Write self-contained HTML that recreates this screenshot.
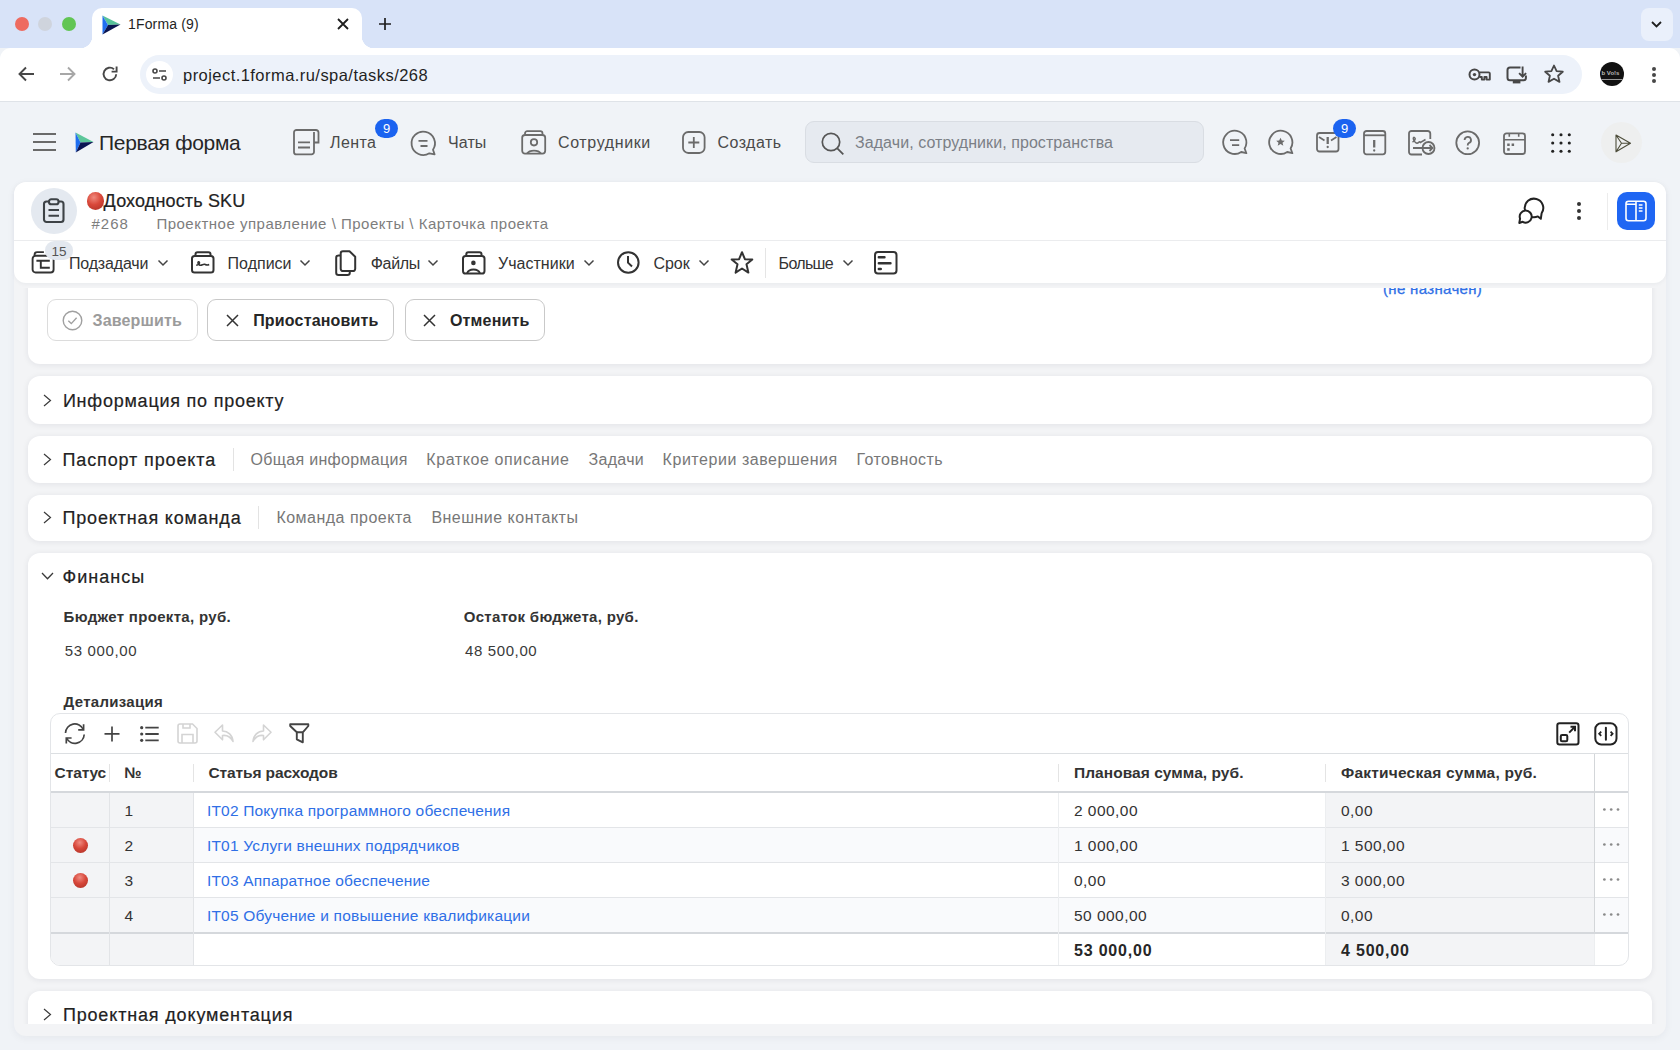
<!DOCTYPE html>
<html lang="ru">
<head>
<meta charset="utf-8">
<title>1Forma</title>
<style>
*{box-sizing:border-box;margin:0;padding:0}
html,body{width:1680px;height:1050px;overflow:hidden;background:#f0f3f7;font-family:"Liberation Sans",sans-serif;color:#262626;position:relative}
.a{position:absolute}
.t{position:absolute;line-height:1;white-space:nowrap}
svg{position:absolute;overflow:visible}
/* chrome */
#tabs{left:0;top:0;width:1680px;height:48px;background:#d8e3f8}
#addr{left:0;top:48px;width:1680px;height:54px;background:#fff;border-bottom:1px solid #dfe3e8;border-radius:11px 11px 0 0}
#app{left:0;top:102px;width:1680px;height:80px;background:#f0f3f7}
#panel{left:14px;top:182px;width:1652px;height:854px;background:#f3f4f6;border-radius:12px;box-shadow:0 2px 8px rgba(30,40,60,.05)}
#clip{left:14px;top:288px;width:1652px;height:736px;overflow:hidden}
.card{position:absolute;left:14px;width:1624px;background:#fff;border-radius:12px;box-shadow:0 1px 6px rgba(20,30,50,.08)}
</style>
</head>
<body>
<!-- TAB STRIP -->
<div id="tabs" class="a">
  <div class="a" style="left:15px;top:17px;width:14px;height:14px;border-radius:50%;background:#ee6b60"></div>
  <div class="a" style="left:38px;top:17px;width:14px;height:14px;border-radius:50%;background:#cfd4dd"></div>
  <div class="a" style="left:62px;top:17px;width:14px;height:14px;border-radius:50%;background:#61c554"></div>
  <div class="a" style="left:92px;top:8px;width:270px;height:40px;background:#fff;border-radius:10px 10px 0 0"></div>
  <div class="a" style="left:80px;top:36px;width:12px;height:12px;background:radial-gradient(circle at 0 0,transparent 12px,#fff 12.5px)"></div>
  <div class="a" style="left:362px;top:36px;width:12px;height:12px;background:radial-gradient(circle at 100% 0,transparent 12px,#fff 12.5px)"></div>
  <svg style="left:102px;top:15px" width="19" height="20" viewBox="0 0 19 20">
    <path d="M0.5 0.5 L18.5 9.5 L6 10 Z" fill="#57c29a"/>
    <path d="M0.5 0.5 L6 10 L0.5 19.5 Z" fill="#1f6ef0"/>
    <path d="M6 10 L18.5 9.5 L0.5 19.5 Z" fill="#0a1550"/>
  </svg>
  <div class="t" style="left:128px;top:17px;font-size:14px;color:#1f1f1f;letter-spacing:0.15px">1Forma (9)</div>
  <svg style="left:337px;top:18px" width="12" height="12" viewBox="0 0 12 12"><path d="M1 1L11 11M11 1L1 11" stroke="#1f1f1f" stroke-width="1.8"/></svg>
  <svg style="left:378.5px;top:18px" width="12" height="12" viewBox="0 0 12 12"><path d="M6 0V12M0 6H12" stroke="#1f1f1f" stroke-width="1.7"/></svg>
  <div class="a" style="left:1641px;top:8px;width:32px;height:33px;border-radius:8px;background:#eaf0fb"></div>
  <svg style="left:1651px;top:21px" width="11" height="7" viewBox="0 0 11 7"><path d="M1 1L5.5 5.5L10 1" stroke="#1f1f1f" stroke-width="1.8" fill="none"/></svg>
</div>
<!-- ADDRESS BAR -->
<div id="addr" class="a">
  <svg style="left:18px;top:18px" width="17" height="16" viewBox="0 0 17 16"><path d="M16 8H2M8 1.5L1.5 8L8 14.5" stroke="#474747" stroke-width="1.9" fill="none"/></svg>
  <svg style="left:59px;top:18px" width="17" height="16" viewBox="0 0 17 16"><path d="M1 8H15M9 1.5L15.5 8L9 14.5" stroke="#a7a7a7" stroke-width="1.9" fill="none"/></svg>
  <svg style="left:101px;top:17px" width="18" height="18" viewBox="0 0 18 18"><path d="M15.2 9.2A6.3 6.3 0 1 1 13 4.2" stroke="#474747" stroke-width="1.9" fill="none"/><path d="M15.6 1.6V6.6H10.6" stroke="#474747" stroke-width="1.9" fill="none"/></svg>
  <div class="a" style="left:140px;top:7px;width:1442px;height:39px;border-radius:20px;background:#edf2fa"></div>
  <div class="a" style="left:146px;top:13px;width:27px;height:27px;border-radius:50%;background:#fff"></div>
  <svg style="left:152px;top:20px" width="15" height="14" viewBox="0 0 15 14"><circle cx="3" cy="3" r="2" stroke="#474747" stroke-width="1.6" fill="none"/><path d="M7 3H14M1 10H8" stroke="#474747" stroke-width="1.6"/><circle cx="12" cy="10" r="2" stroke="#474747" stroke-width="1.6" fill="none"/></svg>
  <div class="t" style="left:183px;top:18.5px;font-size:16.5px;letter-spacing:0.45px;color:#1f1f1f">project.1forma.ru/spa/tasks/268</div>
  <svg style="left:1467.5px;top:19px" width="24" height="15" viewBox="0 0 24 15"><circle cx="6.5" cy="7.6" r="5" stroke="#474747" stroke-width="2" fill="none"/><circle cx="6.5" cy="7.6" r="1.7" fill="#474747"/><path d="M11.4 5.4H20.6A1.2 1.2 0 0 1 21.8 6.6V12.6H18.6V10H16.4V12.6H13.8V10H11.4" stroke="#474747" stroke-width="1.9" fill="none" stroke-linejoin="round"/></svg>
  <svg style="left:1506px;top:16px" width="22" height="21" viewBox="0 0 22 21"><path d="M14.5 3.5H4A2.5 2.5 0 0 0 1.5 6V13.8A2.5 2.5 0 0 0 4 16.3H17.7A2.2 2.2 0 0 0 19.9 14.1V11.5" stroke="#474747" stroke-width="2" fill="none"/><path d="M16.6 2.6V12.4M13.1 9.1L16.6 12.6L20.1 9.1" stroke="#474747" stroke-width="1.9" fill="none"/><rect x="6.8" y="16.8" width="7.6" height="2.6" fill="#474747"/></svg>
  <svg style="left:1544px;top:16px" width="20" height="20" viewBox="0 0 20 20"><path d="M10 1.5L12.6 7.2L18.8 7.7L14.1 11.8L15.5 17.9L10 14.7L4.5 17.9L5.9 11.8L1.2 7.7L7.4 7.2Z" stroke="#474747" stroke-width="1.8" fill="none" stroke-linejoin="round"/></svg>
  <div class="a" style="left:1600px;top:14px;width:24px;height:24px;border-radius:50%;background:#111;overflow:hidden"><div class="t" style="left:1.5px;top:8px;font-size:6px;font-weight:700;color:#bbb">b Vo!s</div><div class="a" style="left:0;top:16.5px;width:24px;height:1px;background:#999"></div></div>
  <div class="a" style="left:1652px;top:18.8px;width:4px;height:4px;border-radius:50%;background:#474747"></div>
  <div class="a" style="left:1652px;top:24.8px;width:4px;height:4px;border-radius:50%;background:#474747"></div>
  <div class="a" style="left:1652px;top:30.8px;width:4px;height:4px;border-radius:50%;background:#474747"></div>
</div>
<!-- APP HEADER -->
<div id="app" class="a">
  <svg style="left:33px;top:31px" width="23" height="18" viewBox="0 0 23 18"><path d="M0 1H23M0 9H23M0 17H23" stroke="#6a6a6a" stroke-width="2"/></svg>
  <svg style="left:75px;top:30px" width="19" height="21" viewBox="0 0 19 21">
    <path d="M0.5 0.5 L18.5 10 L5.5 10.5 Z" fill="#5cc69a"/>
    <path d="M0.5 0.5 L5.5 10.5 L0.8 20.5 Z" fill="#1f6ef0"/>
    <path d="M5.5 10.5 L18.5 10 L0.8 20.5 Z" fill="#0a1452"/>
  </svg>
  <div class="t" style="left:99px;top:30.2px;font-size:21px;letter-spacing:-0.3px;color:#262626">Первая форма</div>
  <!-- Лента -->
  <svg style="left:293px;top:27px" width="27" height="27" viewBox="0 0 27 27"><path d="M1 3.5A2.5 2.5 0 0 1 3.5 1H23A2.5 2.5 0 0 1 25.5 3.5V13.5H21M21 3V22.9A2.5 2.5 0 0 1 18.5 25.4H3.5A2.5 2.5 0 0 1 1 22.9V3.5" stroke="#6b6b6b" stroke-width="1.8" fill="none"/><path d="M5 13.3H17M5 18.5H17" stroke="#6b6b6b" stroke-width="1.8"/></svg>
  <div class="t" style="left:330px;top:33.4px;font-size:16px;letter-spacing:0.4px;color:#4a4a4a">Лента</div>
  <div class="a" style="left:375px;top:17px;width:23px;height:19px;border-radius:10px;background:#1b63f0;color:#fff;font-size:13px;line-height:19px;text-align:center">9</div>
  <!-- Чаты -->
  <svg style="left:409.5px;top:26.5px" width="26" height="26" viewBox="0 0 26 26"><path d="M23 20.8A11.7 11.7 0 1 0 19.4 24.3L24.6 25.4Z" stroke="#6b6b6b" stroke-width="1.8" fill="none" stroke-linejoin="round"/><path d="M8.5 11.8H17.5M10.5 17H17.5" stroke="#6b6b6b" stroke-width="1.8"/></svg>
  <div class="t" style="left:448px;top:33.4px;font-size:16px;letter-spacing:0.1px;color:#4a4a4a">Чаты</div>
  <!-- Сотрудники -->
  <svg style="left:520.5px;top:28px" width="26" height="26" viewBox="0 0 26 26"><path d="M4 4.6V3.5A2.3 2.3 0 0 1 6.3 1.2H19.2A2.3 2.3 0 0 1 21.5 3.5V4.6" stroke="#6b6b6b" stroke-width="1.8" fill="none"/><rect x="1.2" y="5" width="23" height="18.6" rx="2.8" stroke="#6b6b6b" stroke-width="1.8" fill="none"/><circle cx="13" cy="12.3" r="3.2" stroke="#6b6b6b" stroke-width="1.8" fill="none"/><path d="M6 23.6A7.6 5 0 0 1 20 23.6" stroke="#6b6b6b" stroke-width="1.8" fill="none"/></svg>
  <div class="t" style="left:558px;top:33.4px;font-size:16px;letter-spacing:0.62px;color:#4a4a4a">Сотрудники</div>
  <!-- Создать -->
  <svg style="left:682px;top:28.8px" width="24" height="24" viewBox="0 0 24 24"><rect x="1" y="1" width="21.6" height="21" rx="5.3" stroke="#6b6b6b" stroke-width="1.8" fill="none"/><path d="M11.8 6V17M6.3 11.5H17.3" stroke="#6b6b6b" stroke-width="1.8"/></svg>
  <div class="t" style="left:717.5px;top:33.4px;font-size:16px;letter-spacing:0.45px;color:#4a4a4a">Создать</div>
  <!-- search -->
  <div class="a" style="left:805px;top:19px;width:399px;height:42px;border-radius:9px;background:#e6eaf0;border:1px solid #d9dde3"></div>
  <svg style="left:821px;top:30px" width="24" height="24" viewBox="0 0 24 24"><circle cx="10" cy="10" r="8.7" stroke="#555" stroke-width="1.7" fill="none"/><path d="M16.3 16.3L22.3 22.3" stroke="#555" stroke-width="1.8"/></svg>
  <div class="t" style="left:855px;top:32.5px;font-size:16px;letter-spacing:0.07px;color:#7b7f86">Задачи, сотрудники, пространства</div>
  <!-- right icons -->
  <svg style="left:1221.5px;top:26px" width="26" height="26" viewBox="0 0 26 26"><path d="M22.6 20.5A11.6 11.6 0 1 0 19.2 24L24.4 25.2Z" stroke="#6b6b6b" stroke-width="1.8" fill="none" stroke-linejoin="round"/><path d="M8 12.2H17.2M10 17.2H17.2" stroke="#6b6b6b" stroke-width="1.8"/></svg>
  <svg style="left:1268px;top:26px" width="26" height="26" viewBox="0 0 26 26"><path d="M22.6 20.5A11.6 11.6 0 1 0 19.2 24L24.4 25.2Z" stroke="#6b6b6b" stroke-width="1.8" fill="none" stroke-linejoin="round"/><path d="M12.5 9.8L13.8 12.6L16.8 12.8L14.5 14.8L15.3 17.7L12.5 16.1L9.7 17.7L10.5 14.8L8.2 12.8L11.2 12.6Z" fill="#6b6b6b"/></svg>
  <svg style="left:1316px;top:27.8px" width="24" height="22" viewBox="0 0 24 22"><rect x="1" y="3" width="21.5" height="18.5" rx="2.5" stroke="#6b6b6b" stroke-width="1.8" fill="none"/><path d="M3 7L8.5 10.5M20.5 7L15 10.5" stroke="#6b6b6b" stroke-width="1.8"/><path d="M11.7 7V14" stroke="#6b6b6b" stroke-width="2.3"/><circle cx="11.7" cy="17" r="1.15" fill="#6b6b6b"/></svg>
  <div class="a" style="left:1333px;top:16.5px;width:23px;height:19.5px;border-radius:10px;background:#1b63f0;color:#fff;font-size:13px;line-height:19.5px;text-align:center">9</div>
  <svg style="left:1363px;top:27.6px" width="24" height="26" viewBox="0 0 24 26"><rect x="1" y="1" width="21.3" height="23.3" rx="2.5" stroke="#6b6b6b" stroke-width="1.8" fill="none"/><path d="M1 5.3H22.3" stroke="#6b6b6b" stroke-width="1.8"/><path d="M11.2 10V17.5" stroke="#6b6b6b" stroke-width="2.3"/><circle cx="11.2" cy="20.5" r="1.15" fill="#6b6b6b"/></svg>
  <svg style="left:1408px;top:28px" width="30" height="28" viewBox="0 0 30 28"><path d="M22.3 9V3.5A2.5 2.5 0 0 0 19.8 1H3.5A2.5 2.5 0 0 0 1 3.5V22A2.5 2.5 0 0 0 3.5 24.5H14" stroke="#6b6b6b" stroke-width="1.8" fill="none"/><path d="M4.5 12C7 11 8 8.5 6.5 7.5S4.5 10 7.5 12.5S11 10 12.5 12.5L17.5 9.5" stroke="#6b6b6b" stroke-width="1.5" fill="none"/><path d="M5 18H24.5M21.5 15L24.5 18L21.5 21" stroke="#6b6b6b" stroke-width="1.8" fill="none"/><circle cx="20.5" cy="18" r="6" stroke="#6b6b6b" stroke-width="1.8" fill="none"/></svg>
  <svg style="left:1455px;top:27.5px" width="26" height="26" viewBox="0 0 26 26"><circle cx="12.7" cy="12.8" r="11.4" stroke="#6b6b6b" stroke-width="1.8" fill="none"/><path d="M9.6 10A3.2 3.2 0 1 1 13.7 13.1C12.9 13.5 12.7 14.1 12.7 15.4" stroke="#6b6b6b" stroke-width="1.8" fill="none"/><circle cx="12.7" cy="18.4" r="1.15" fill="#6b6b6b"/></svg>
  <svg style="left:1503px;top:28.5px" width="24" height="25" viewBox="0 0 24 25"><rect x="1" y="2.3" width="21" height="20.7" rx="2.5" stroke="#6b6b6b" stroke-width="1.8" fill="none"/><path d="M1 8.7H22M6.3 2.3V5.8M15.7 2.3V5.8" stroke="#6b6b6b" stroke-width="1.6"/><rect x="4.2" y="12.5" width="2.5" height="2.5" fill="#6b6b6b"/><rect x="8.6" y="12.5" width="2.5" height="2.5" fill="#6b6b6b"/><rect x="4.2" y="17.2" width="2.5" height="2.5" fill="#6b6b6b"/></svg>
  <svg style="left:1551px;top:31px" width="21" height="21" viewBox="0 0 21 21"><g fill="#222"><circle cx="1.7" cy="1.7" r="1.55"/><circle cx="10" cy="1.7" r="1.55"/><circle cx="18.3" cy="1.7" r="1.55"/><circle cx="1.7" cy="10" r="1.55"/><circle cx="10" cy="10" r="1.55"/><circle cx="18.3" cy="10" r="1.55"/><circle cx="1.7" cy="18.3" r="1.55"/><circle cx="10" cy="18.3" r="1.55"/><circle cx="18.3" cy="18.3" r="1.55"/></g></svg>
  <div class="a" style="left:1601px;top:20px;width:41px;height:41px;border-radius:50%;background:#eeefef"></div>
  <svg style="left:1615px;top:31px" width="17" height="20" viewBox="0 0 17 20"><path d="M1 2L15.5 10.3L1 18.8Z M1 18.8L6.5 10.3L1 2 M6.5 10.3H15.5" stroke="#4d4d3a" stroke-width="1.1" fill="none" stroke-linejoin="round"/></svg>
</div>
<!-- PANEL -->
<div id="panel" class="a"></div>
<div id="clip" class="a">
<div class="card" style="top:-88px;height:164px"></div>
<div class="a" style="left:33px;top:11.3px;width:150.5px;height:42px;border:1px solid #dcdcdc;border-radius:9px;background:#fff"></div>
<svg style="left:48px;top:22px" width="21" height="21" viewBox="0 0 21 21"><circle cx="10.5" cy="10.5" r="9.3" stroke="#a0a0a0" stroke-width="1.4" fill="none"/><path d="M6.3 10.8L9.3 13.6L14.6 7.8" stroke="#a0a0a0" stroke-width="1.4" fill="none"/></svg>
<div class="t" style="left:78.5px;top:25.16px;font-size:16px;letter-spacing:0.15px;font-weight:700;color:#9b9b9b">Завершить</div>
<div class="a" style="left:193.3px;top:11.3px;width:186.5px;height:42px;border:1px solid #c9c9c9;border-radius:9px;background:#fff"></div>
<svg style="left:212px;top:26px" width="13" height="13" viewBox="0 0 13 13"><path d="M1 1L12 12M12 1L1 12" stroke="#333" stroke-width="1.5"/></svg>
<div class="t" style="left:239.2px;top:25.16px;font-size:16px;letter-spacing:0.18px;font-weight:700;color:#262626">Приостановить</div>
<div class="a" style="left:390.5px;top:11.3px;width:140.5px;height:42px;border:1px solid #c9c9c9;border-radius:9px;background:#fff"></div>
<svg style="left:409px;top:26px" width="13" height="13" viewBox="0 0 13 13"><path d="M1 1L12 12M12 1L1 12" stroke="#333" stroke-width="1.5"/></svg>
<div class="t" style="left:436.0px;top:25.16px;font-size:16px;letter-spacing:0.16px;font-weight:700;color:#262626">Отменить</div>
<div class="t" style="left:1369.0px;top:-7.50px;font-size:15px;letter-spacing:0.33px;font-weight:400;color:#2f6fe6;-webkit-text-stroke:0.3px #2f6fe6">(не назначен)</div>
<div class="card" style="top:88px;height:48px"></div>
<svg style="left:29.0px;top:105.5px" width="9" height="13" viewBox="0 0 9 13"><path d="M1 1L7.5 6.5L1 12" stroke="#3a3a3a" stroke-width="1.2" fill="none"/></svg>
<div class="t" style="left:48.9px;top:103.66px;font-size:18px;letter-spacing:0.77px;font-weight:400;color:#222;-webkit-text-stroke:0.2px #222">Информация по проекту</div>
<div class="card" style="top:148px;height:46.5px"></div>
<svg style="left:29.0px;top:164.5px" width="9" height="13" viewBox="0 0 9 13"><path d="M1 1L7.5 6.5L1 12" stroke="#3a3a3a" stroke-width="1.2" fill="none"/></svg>
<div class="t" style="left:48.5px;top:163.46px;font-size:18px;letter-spacing:0.87px;font-weight:400;color:#222;-webkit-text-stroke:0.2px #222">Паспорт проекта</div>
<div class="a" style="left:219px;top:160px;width:1px;height:23px;background:#e3e3e3"></div>
<div class="t" style="left:236.5px;top:163.86px;font-size:16px;letter-spacing:0.32px;font-weight:400;color:#777">Общая информация</div>
<div class="t" style="left:412.3px;top:163.86px;font-size:16px;letter-spacing:0.6px;font-weight:400;color:#777">Краткое описание</div>
<div class="t" style="left:574.6px;top:163.86px;font-size:16px;letter-spacing:0.28px;font-weight:400;color:#777">Задачи</div>
<div class="t" style="left:648.6px;top:163.86px;font-size:16px;letter-spacing:0.54px;font-weight:400;color:#777">Критерии завершения</div>
<div class="t" style="left:842.5px;top:163.86px;font-size:16px;letter-spacing:0.44px;font-weight:400;color:#777">Готовность</div>
<div class="card" style="top:206.5px;height:46.5px"></div>
<svg style="left:29.0px;top:222.5px" width="9" height="13" viewBox="0 0 9 13"><path d="M1 1L7.5 6.5L1 12" stroke="#3a3a3a" stroke-width="1.2" fill="none"/></svg>
<div class="t" style="left:48.5px;top:221.46px;font-size:18px;letter-spacing:0.83px;font-weight:400;color:#222;-webkit-text-stroke:0.2px #222">Проектная команда</div>
<div class="a" style="left:244px;top:218px;width:1px;height:23px;background:#e3e3e3"></div>
<div class="t" style="left:262.4px;top:221.96px;font-size:16px;letter-spacing:0.49px;font-weight:400;color:#777">Команда проекта</div>
<div class="t" style="left:417.4px;top:221.96px;font-size:16px;letter-spacing:0.48px;font-weight:400;color:#777">Внешние контакты</div>
<div class="card" style="top:264.5px;height:426.5px"></div>
<svg style="left:26.5px;top:284.0px" width="13" height="8" viewBox="0 0 13 8"><path d="M1 1L6.5 6.8L12 1" stroke="#3a3a3a" stroke-width="1.3" fill="none"/></svg>
<div class="t" style="left:48.5px;top:279.96px;font-size:18px;letter-spacing:1.0px;font-weight:400;color:#222;-webkit-text-stroke:0.2px #222">Финансы</div>
<div class="t" style="left:49.6px;top:321.20px;font-size:15px;letter-spacing:0.32px;font-weight:700;color:#333">Бюджет проекта, руб.</div>
<div class="t" style="left:449.7px;top:321.20px;font-size:15px;letter-spacing:0.31px;font-weight:700;color:#333">Остаток бюджета, руб.</div>
<div class="t" style="left:50.8px;top:355.10px;font-size:15px;letter-spacing:0.62px;font-weight:400;color:#3a3a3a">53 000,00</div>
<div class="t" style="left:451.0px;top:355.10px;font-size:15px;letter-spacing:0.62px;font-weight:400;color:#3a3a3a">48 500,00</div>
<div class="t" style="left:49.6px;top:405.50px;font-size:15px;letter-spacing:0.29px;font-weight:700;color:#333">Детализация</div>
<div class="card" style="top:703px;height:80px"></div>
<svg style="left:29.0px;top:720.0px" width="9" height="13" viewBox="0 0 9 13"><path d="M1 1L7.5 6.5L1 12" stroke="#3a3a3a" stroke-width="1.2" fill="none"/></svg>
<div class="t" style="left:48.9px;top:718.26px;font-size:18px;letter-spacing:0.84px;font-weight:400;color:#222;-webkit-text-stroke:0.2px #222">Проектная документация</div>
<div class="a" style="left:36px;top:425.3px;width:1579px;height:252.7px;border:1px solid #e3e5e8;border-radius:10px;background:#fff;overflow:hidden">
<div class="a" style="left:-1.0px;top:78.7px;width:143.0px;height:177.0px;background:#f3f4f6"></div>
<div class="a" style="left:1275.0px;top:78.7px;width:268.0px;height:177.0px;background:#f3f4f6"></div>
<div class="a" style="left:143.0px;top:113.7px;width:1131.0px;height:34.0px;background:#f9fafc"></div>
<div class="a" style="left:1544.0px;top:113.7px;width:35.0px;height:34.0px;background:#f9fafc"></div>
<div class="a" style="left:143.0px;top:183.7px;width:1131.0px;height:34.0px;background:#f9fafc"></div>
<div class="a" style="left:1544.0px;top:183.7px;width:35.0px;height:34.0px;background:#f9fafc"></div>
<div class="a" style="left:-1.0px;top:38.7px;width:1580.0px;height:1.0px;background:#dcdfe2"></div>
<div class="a" style="left:-1.0px;top:77.0px;width:1580.0px;height:2.0px;background:#d5d8dc"></div>
<div class="a" style="left:-1.0px;top:112.7px;width:1580.0px;height:1.0px;background:#e3e5e8"></div>
<div class="a" style="left:-1.0px;top:147.7px;width:1580.0px;height:1.0px;background:#e3e5e8"></div>
<div class="a" style="left:-1.0px;top:182.7px;width:1580.0px;height:1.0px;background:#e3e5e8"></div>
<div class="a" style="left:-1.0px;top:217.7px;width:1580.0px;height:2.0px;background:#d5d8dc"></div>
<div class="a" style="left:58.0px;top:78.7px;width:1.0px;height:177.0px;background:#e2e4e7"></div>
<div class="a" style="left:142.0px;top:78.7px;width:1.0px;height:177.0px;background:#e2e4e7"></div>
<div class="a" style="left:1007.0px;top:78.7px;width:1.0px;height:177.0px;background:#eceef0"></div>
<div class="a" style="left:1274.0px;top:78.7px;width:1.0px;height:177.0px;background:#eceef0"></div>
<div class="a" style="left:1542.7px;top:39.7px;width:1.5px;height:178.0px;background:#d3d6d9"></div>
<div class="a" style="left:1542.7px;top:219.7px;width:1.0px;height:36.0px;background:#eceef0"></div>
<div class="a" style="left:58.0px;top:49.7px;width:1.0px;height:18.0px;background:#e4e4e4"></div>
<div class="a" style="left:142.0px;top:49.7px;width:1.0px;height:18.0px;background:#e4e4e4"></div>
<div class="a" style="left:1007.0px;top:49.7px;width:1.0px;height:18.0px;background:#e4e4e4"></div>
<div class="a" style="left:1274.0px;top:49.7px;width:1.0px;height:18.0px;background:#e4e4e4"></div>
<div class="t" style="left:3.6px;top:50.78px;font-size:15.5px;letter-spacing:-0.12px;font-weight:700;color:#333">Статус</div>
<div class="t" style="left:73.3px;top:50.78px;font-size:15.5px;letter-spacing:0px;font-weight:700;color:#333">№</div>
<div class="t" style="left:157.4px;top:50.78px;font-size:15.5px;letter-spacing:-0.1px;font-weight:700;color:#333">Статья расходов</div>
<div class="t" style="left:1023.0px;top:50.78px;font-size:15.5px;letter-spacing:0.05px;font-weight:700;color:#333">Плановая сумма, руб.</div>
<div class="t" style="left:1290.0px;top:50.78px;font-size:15.5px;letter-spacing:0.21px;font-weight:700;color:#333">Фактическая сумма, руб.</div>
<div class="t" style="left:73.6px;top:88.68px;font-size:15.5px;letter-spacing:0px;font-weight:400;color:#333">1</div>
<div class="t" style="left:155.9px;top:88.88px;font-size:15.5px;letter-spacing:0.2px;font-weight:400;color:#2f6fe6">IT02 Покупка программного обеспечения</div>
<div class="t" style="left:1023.0px;top:88.68px;font-size:15.5px;letter-spacing:0.46px;font-weight:400;color:#333">2 000,00</div>
<div class="t" style="left:1290.0px;top:88.68px;font-size:15.5px;letter-spacing:0.46px;font-weight:400;color:#333">0,00</div>
<svg style="left:1552.0px;top:94.2px" width="17" height="3" viewBox="0 0 17 3"><circle cx="1.4" cy="1.5" r="1.35" fill="#8a8a8a"/><circle cx="8.2" cy="1.5" r="1.35" fill="#8a8a8a"/><circle cx="15" cy="1.5" r="1.35" fill="#8a8a8a"/></svg>
<div class="a" style="left:22px;top:123.9px;width:15px;height:15px;border-radius:50%;background:radial-gradient(circle at 45% 30%,#ef8a80 0,#d7473a 45%,#a92e23 100%)"></div>
<div class="t" style="left:73.6px;top:123.68px;font-size:15.5px;letter-spacing:0px;font-weight:400;color:#333">2</div>
<div class="t" style="left:155.9px;top:123.88px;font-size:15.5px;letter-spacing:0.2px;font-weight:400;color:#2f6fe6">IT01 Услуги внешних подрядчиков</div>
<div class="t" style="left:1023.0px;top:123.68px;font-size:15.5px;letter-spacing:0.46px;font-weight:400;color:#333">1 000,00</div>
<div class="t" style="left:1290.0px;top:123.68px;font-size:15.5px;letter-spacing:0.46px;font-weight:400;color:#333">1 500,00</div>
<svg style="left:1552.0px;top:129.2px" width="17" height="3" viewBox="0 0 17 3"><circle cx="1.4" cy="1.5" r="1.35" fill="#8a8a8a"/><circle cx="8.2" cy="1.5" r="1.35" fill="#8a8a8a"/><circle cx="15" cy="1.5" r="1.35" fill="#8a8a8a"/></svg>
<div class="a" style="left:22px;top:158.9px;width:15px;height:15px;border-radius:50%;background:radial-gradient(circle at 45% 30%,#ef8a80 0,#d7473a 45%,#a92e23 100%)"></div>
<div class="t" style="left:73.6px;top:158.68px;font-size:15.5px;letter-spacing:0px;font-weight:400;color:#333">3</div>
<div class="t" style="left:155.9px;top:158.88px;font-size:15.5px;letter-spacing:0.2px;font-weight:400;color:#2f6fe6">IT03 Аппаратное обеспечение</div>
<div class="t" style="left:1023.0px;top:158.68px;font-size:15.5px;letter-spacing:0.46px;font-weight:400;color:#333">0,00</div>
<div class="t" style="left:1290.0px;top:158.68px;font-size:15.5px;letter-spacing:0.46px;font-weight:400;color:#333">3 000,00</div>
<svg style="left:1552.0px;top:164.2px" width="17" height="3" viewBox="0 0 17 3"><circle cx="1.4" cy="1.5" r="1.35" fill="#8a8a8a"/><circle cx="8.2" cy="1.5" r="1.35" fill="#8a8a8a"/><circle cx="15" cy="1.5" r="1.35" fill="#8a8a8a"/></svg>
<div class="t" style="left:73.6px;top:193.68px;font-size:15.5px;letter-spacing:0px;font-weight:400;color:#333">4</div>
<div class="t" style="left:155.9px;top:193.88px;font-size:15.5px;letter-spacing:0.2px;font-weight:400;color:#2f6fe6">IT05 Обучение и повышение квалификации</div>
<div class="t" style="left:1023.0px;top:193.68px;font-size:15.5px;letter-spacing:0.46px;font-weight:400;color:#333">50 000,00</div>
<div class="t" style="left:1290.0px;top:193.68px;font-size:15.5px;letter-spacing:0.46px;font-weight:400;color:#333">0,00</div>
<svg style="left:1552.0px;top:199.2px" width="17" height="3" viewBox="0 0 17 3"><circle cx="1.4" cy="1.5" r="1.35" fill="#8a8a8a"/><circle cx="8.2" cy="1.5" r="1.35" fill="#8a8a8a"/><circle cx="15" cy="1.5" r="1.35" fill="#8a8a8a"/></svg>
<div class="t" style="left:1023.0px;top:229.16px;font-size:16px;letter-spacing:0.8px;font-weight:700;color:#262626">53 000,00</div>
<div class="t" style="left:1290.0px;top:229.16px;font-size:16px;letter-spacing:0.8px;font-weight:700;color:#262626">4 500,00</div>
<svg style="left:13.0px;top:8.7px" width="22" height="22" viewBox="0 0 22 22"><path d="M1.5 10A9.3 9.3 0 0 1 19.3 6.5" stroke="#444" stroke-width="1.7" fill="none"/><path d="M19.6 1.2V6.8H14.2" stroke="#444" stroke-width="1.7" fill="none"/><path d="M20.2 11.5A9.3 9.3 0 0 1 2.6 15.2" stroke="#444" stroke-width="1.7" fill="none"/><path d="M2.3 20.5V15H7.6" stroke="#444" stroke-width="1.7" fill="none"/></svg>
<svg style="left:53.0px;top:11.7px" width="16" height="16" viewBox="0 0 16 16"><path d="M8 0.5V15.5M0.5 7.8H15.5" stroke="#444" stroke-width="1.7"/></svg>
<svg style="left:89.0px;top:11.7px" width="20" height="16" viewBox="0 0 20 16"><circle cx="1.7" cy="1.7" r="1.6" fill="#444"/><circle cx="1.7" cy="8" r="1.6" fill="#444"/><circle cx="1.7" cy="14.3" r="1.6" fill="#444"/><path d="M5.3 1.7H18.7M5.3 8H18.7M5.3 14.3H18.7" stroke="#444" stroke-width="1.8"/></svg>
<svg style="left:125.5px;top:9.2px" width="21" height="21" viewBox="0 0 21 21"><path d="M1 3A2 2 0 0 1 3 1H15.5L20 5.5V18A2 2 0 0 1 18 20H3A2 2 0 0 1 1 18Z" stroke="#d4d4d4" stroke-width="1.6" fill="none"/><path d="M6 1V5H13V1M5 20V11.5H16V20" stroke="#d4d4d4" stroke-width="1.6" fill="none"/></svg>
<svg style="left:162.5px;top:10.2px" width="21" height="19" viewBox="0 0 21 19"><path d="M8.5 1L1 8.3L8.5 15.8V11.5C12.5 11 16.5 12.5 19 17.5C18.5 11 14 7 8.5 7Z" stroke="#d4d4d4" stroke-width="1.6" fill="none" stroke-linejoin="round"/></svg>
<svg style="left:200.0px;top:10.2px" width="21" height="19" viewBox="0 0 21 19"><path d="M12.5 1L20 8.3L12.5 15.8V11.5C8.5 11 4.5 12.5 2 17.5C2.5 11 7 7 12.5 7Z" stroke="#d4d4d4" stroke-width="1.6" fill="none" stroke-linejoin="round"/></svg>
<svg style="left:237.5px;top:9.2px" width="21" height="21" viewBox="0 0 21 21"><path d="M1.2 1.3H19.3V3L13.8 9.3V19.3L7.8 16.3V9.3L1.2 3Z" stroke="#444" stroke-width="1.9" fill="none" stroke-linejoin="round"/><path d="M7.8 9.3H13.8" stroke="#444" stroke-width="1.9"/></svg>
<svg style="left:1505.0px;top:8.0px" width="24" height="24" viewBox="0 0 24 24"><rect x="1.3" y="1.3" width="21.2" height="21.2" rx="2.3" stroke="#222" stroke-width="2" fill="none"/><rect x="4.8" y="12.9" width="6.5" height="6.3" rx="1.3" stroke="#222" stroke-width="2" fill="none"/><path d="M13.2 10.6L19 4.8M14.5 4.8H19V9.3" stroke="#222" stroke-width="2" fill="none"/></svg>
<svg style="left:1542.5px;top:8.0px" width="24" height="24" viewBox="0 0 24 24"><rect x="1.3" y="1.3" width="21.2" height="21.2" rx="6" stroke="#222" stroke-width="2" fill="none"/><path d="M11.9 5.8V17.8" stroke="#222" stroke-width="2" stroke-linecap="round"/><path d="M7.2 9.7L5.2 11.8L7.2 13.9M16.6 9.7L18.6 11.8L16.6 13.9" stroke="#222" stroke-width="1.8" fill="none"/></svg>
</div>
</div>
<!-- HEADER CARD -->
<div id="hcard" class="a" style="left:14px;top:182px;width:1652px;height:101px;background:#fff;border-radius:12px;box-shadow:0 1px 4px rgba(20,30,50,.05)">
  <div class="a" style="left:16.5px;top:6px;width:46px;height:46px;border-radius:50%;background:#e4e9f0"></div>
  <svg style="left:29px;top:16px" width="22" height="26" viewBox="0 0 22 26"><path d="M6 3.5H3.5A2.5 2.5 0 0 0 1 6V21.5A2.5 2.5 0 0 0 3.5 24H18A2.5 2.5 0 0 0 20.5 21.5V6A2.5 2.5 0 0 0 18 3.5H15.5" stroke="#3d4246" stroke-width="2.1" fill="none"/><rect x="6" y="1.3" width="9.5" height="5" rx="2.3" stroke="#3d4246" stroke-width="2.1" fill="none"/><path d="M5.5 12H16M5.5 17.8H16" stroke="#3d4246" stroke-width="2.1"/></svg>
  <div class="a" style="left:72.5px;top:10px;width:17.5px;height:17.5px;border-radius:50%;background:radial-gradient(circle at 40% 30%,#f08a7e 0,#d9483a 45%,#a92e23 100%)"></div>
  <div class="t" style="left:89.6px;top:9.8px;font-size:18px;letter-spacing:0.15px;color:#222;-webkit-text-stroke:0.2px #222">Доходность SKU</div>
  <div class="t" style="left:77.4px;top:33.9px;font-size:15px;letter-spacing:1.05px;color:#7d7d7d">#268</div>
  <div class="t" style="left:142.4px;top:33.9px;font-size:15px;letter-spacing:0.5px;color:#7d7d7d">Проектное управление \ Проекты \ Карточка проекта</div>
  <!-- right -->
  <svg style="left:1504px;top:15px" width="28" height="28" viewBox="0 0 28 28"><path d="M19.9 19.4A9.3 9.3 0 1 1 23.6 16.3L22.8 21.8Z" stroke="#222" stroke-width="2" fill="none" stroke-linejoin="round"/><path d="M2.06 21.65A6 6 0 1 1 4.7 24.8L1.3 26Z" stroke="#222" stroke-width="2" fill="#fff" stroke-linejoin="round"/></svg>
  <div class="a" style="left:1562.5px;top:19.8px;width:4.4px;height:4.4px;border-radius:50%;background:#333"></div>
  <div class="a" style="left:1562.5px;top:26.8px;width:4.4px;height:4.4px;border-radius:50%;background:#333"></div>
  <div class="a" style="left:1562.5px;top:33.8px;width:4.4px;height:4.4px;border-radius:50%;background:#333"></div>
  <div class="a" style="left:1592.5px;top:10.5px;width:1px;height:37px;background:#ececec"></div>
  <div class="a" style="left:1603px;top:10px;width:37.5px;height:38px;border-radius:10px;background:#1f66f3"></div>
  <svg style="left:1611px;top:18px" width="22" height="22" viewBox="0 0 22 22"><rect x="1" y="1.2" width="20" height="19.5" rx="2.5" stroke="#fff" stroke-width="1.6" fill="none"/><path d="M11 1.2V20.7M1 4.2H11M13.8 5H17.5M13.8 8H17.5M13.8 11H17.5" stroke="#fff" stroke-width="1.6"/></svg>
  <div class="a" style="left:0;top:58px;width:1652px;height:1px;background:#ebecee"></div>
  <!-- toolbar -->
  <svg style="left:17px;top:68.8px" width="24" height="24" viewBox="0 0 24 24"><path d="M3.6 4.6V3.6A2.5 2.5 0 0 1 6.1 1.1H12.9" stroke="#333" stroke-width="1.9" fill="none"/><rect x="1.6" y="4.7" width="21" height="16.8" rx="3" stroke="#333" stroke-width="1.9" fill="none"/><path d="M5.4 9.8H18.8M9.8 9.8V16.8H18.8" stroke="#333" stroke-width="1.9" fill="none"/></svg>
  <div class="a" style="left:30.8px;top:59px;width:28.6px;height:18.6px;border-radius:9.3px;background:#e3e8ef;color:#555;font-size:13.5px;line-height:21px;text-align:center">15</div>
  <div class="t" style="left:55px;top:73.8px;font-size:16px;letter-spacing:-0.17px;color:#333">Подзадачи</div>
  <svg style="left:144px;top:78px" width="10" height="6" viewBox="0 0 10 6"><path d="M0.5 0.5L5 5L9.5 0.5" stroke="#444" stroke-width="1.5" fill="none"/></svg>
  <svg style="left:177px;top:69px" width="24" height="24" viewBox="0 0 24 24"><path d="M4.5 4.5V3.2A2 2 0 0 1 6.5 1.2H17.5A2 2 0 0 1 19.5 3.2V4.5" stroke="#333" stroke-width="2" fill="none"/><rect x="1" y="5" width="21.5" height="16.6" rx="2.6" stroke="#333" stroke-width="2" fill="none"/><path d="M5.2 14.3C7.5 14 9.3 12.3 8.3 11.1C7.2 9.9 5.6 12.1 8.5 14C10.5 15.3 12 12.5 13.8 13.3C15.3 14 16 14.5 18.2 13.5" stroke="#333" stroke-width="1.5" fill="none"/></svg>
  <div class="t" style="left:213.6px;top:73.8px;font-size:16px;color:#333">Подписи</div>
  <svg style="left:286.4px;top:78px" width="10" height="6" viewBox="0 0 10 6"><path d="M0.5 0.5L5 5L9.5 0.5" stroke="#444" stroke-width="1.5" fill="none"/></svg>
  <svg style="left:321px;top:67.5px" width="22" height="26" viewBox="0 0 22 26"><path d="M5.5 5.5H3.5A2.3 2.3 0 0 0 1.2 7.8V22.8A2.3 2.3 0 0 0 3.5 25.1H12.5A2.3 2.3 0 0 0 14.8 22.8V21.3" stroke="#333" stroke-width="2" fill="none"/><path d="M8 1.2H14.5L20.2 6.7V18.8A2.3 2.3 0 0 1 17.9 21.1H8A2.3 2.3 0 0 1 5.7 18.8V3.5A2.3 2.3 0 0 1 8 1.2Z" stroke="#333" stroke-width="2" fill="none" stroke-linejoin="round"/></svg>
  <div class="t" style="left:356.7px;top:73.8px;font-size:16px;letter-spacing:-0.3px;color:#333">Файлы</div>
  <svg style="left:414.4px;top:78px" width="10" height="6" viewBox="0 0 10 6"><path d="M0.5 0.5L5 5L9.5 0.5" stroke="#444" stroke-width="1.5" fill="none"/></svg>
  <svg style="left:447.5px;top:68.5px" width="24" height="24" viewBox="0 0 24 24"><path d="M4.3 4.5V3.2A2 2 0 0 1 6.3 1.2H17.5A2 2 0 0 1 19.5 3.2V4.5" stroke="#333" stroke-width="2" fill="none"/><rect x="1" y="5" width="21.5" height="17.5" rx="2.6" stroke="#333" stroke-width="2" fill="none"/><circle cx="11.4" cy="11.9" r="2.3" fill="#333"/><path d="M5 22.5A6.8 5.5 0 0 1 18 22.5" stroke="#333" stroke-width="2" fill="none"/></svg>
  <div class="t" style="left:484px;top:73.8px;font-size:16px;letter-spacing:0.02px;color:#333">Участники</div>
  <svg style="left:569.8px;top:78px" width="10" height="6" viewBox="0 0 10 6"><path d="M0.5 0.5L5 5L9.5 0.5" stroke="#444" stroke-width="1.5" fill="none"/></svg>
  <svg style="left:603px;top:69px" width="24" height="24" viewBox="0 0 24 24"><circle cx="11.3" cy="11.5" r="10.3" stroke="#333" stroke-width="2" fill="none"/><path d="M11 5V11.6L15 15.5" stroke="#333" stroke-width="2" fill="none"/></svg>
  <div class="t" style="left:639.6px;top:73.8px;font-size:16px;letter-spacing:-0.1px;color:#333">Срок</div>
  <svg style="left:684.8px;top:78px" width="10" height="6" viewBox="0 0 10 6"><path d="M0.5 0.5L5 5L9.5 0.5" stroke="#444" stroke-width="1.5" fill="none"/></svg>
  <svg style="left:715.5px;top:69px" width="24" height="24" viewBox="0 0 24 24"><path d="M12 1.2L14.9 8.2L22.3 8.5L16.5 13.2L18.4 21.6L12 17.5L5.6 21.6L7.5 13.2L1.7 8.5L9.1 8.2Z" stroke="#333" stroke-width="2" fill="none" stroke-linejoin="round"/></svg>
  <div class="a" style="left:751px;top:65.5px;width:1px;height:30px;background:#e5e5e5"></div>
  <div class="t" style="left:764.6px;top:73.8px;font-size:16px;letter-spacing:-0.68px;color:#333">Больше</div>
  <svg style="left:828.6px;top:78px" width="10" height="6" viewBox="0 0 10 6"><path d="M0.5 0.5L5 5L9.5 0.5" stroke="#444" stroke-width="1.5" fill="none"/></svg>
  <svg style="left:859.5px;top:69px" width="24" height="24" viewBox="0 0 24 24"><rect x="1" y="1" width="21.5" height="21.5" rx="3" stroke="#333" stroke-width="2" fill="none"/><path d="M4.8 6.3H10.5M4.8 12.2H16.5M4.8 18H6.8" stroke="#333" stroke-width="2.4" stroke-linecap="round"/></svg>
</div>
</body>
</html>
